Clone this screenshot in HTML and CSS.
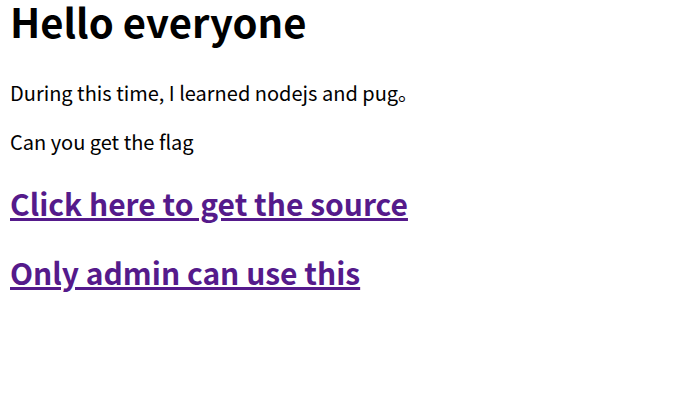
FILE: index.html
```html
<!DOCTYPE html>
<html>
<head>
<meta charset="utf-8">
<title>Hello</title>
<link rel="stylesheet" href="styles.css">
</head>
<body>
<h1 class="title">Hello everyone</h1>
<p class="text">During this time, I learned nodejs and pug。</p>
<p class="text">Can you get the flag</p>
<h2 class="link-head"><a class="link" href="#source">Click here to get the source</a></h2>
<h2 class="link-head"><a class="link" href="#admin">Only admin can use this</a></h2>
</body>
</html>
```

FILE: styles.css
```css
body {
  margin: 0 10px;
  font-family: "Noto Sans CJK SC", sans-serif;
  font-size: 20px;
  color: #000;
  background: #fff;
}
.title {
  font-size: 40px;
  font-weight: bold;
  line-height: 42px;
  margin: 0 0 36px;
}
.text {
  margin: 20px 0;
}
.link-head {
  font-size: 30px;
  font-weight: bold;
  margin: 25px 0;
}
.link {
  color: #551a8b;
  text-decoration: underline;
}
```
